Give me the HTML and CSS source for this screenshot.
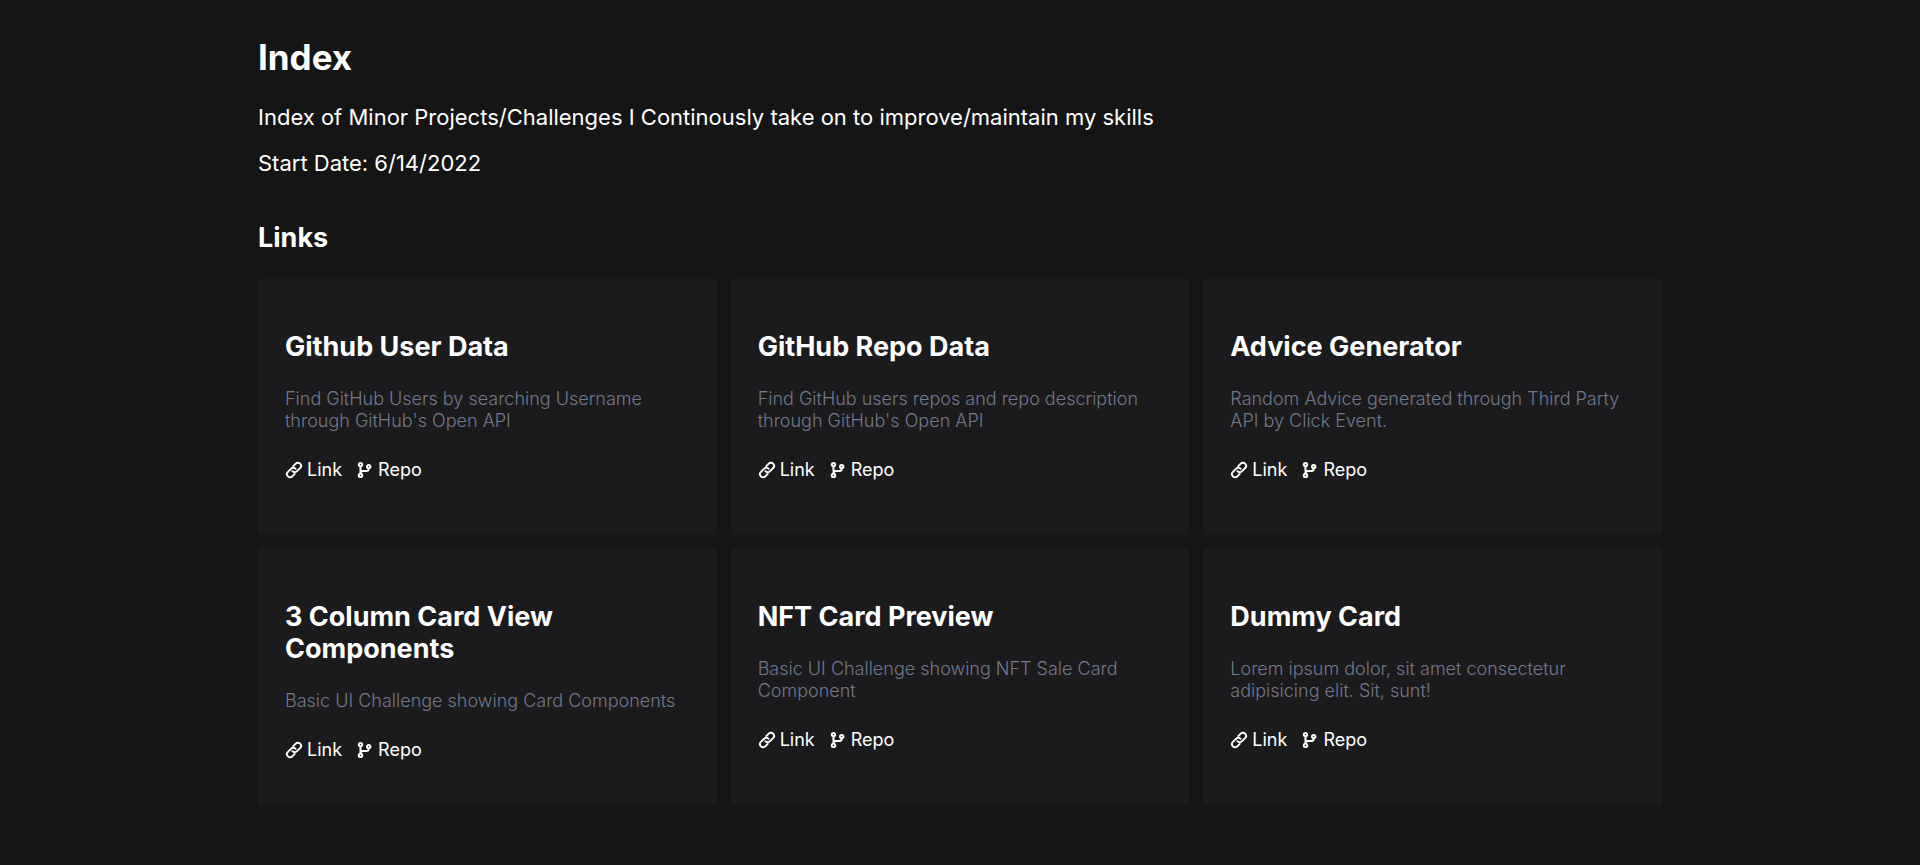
FILE: index.html
```
<!DOCTYPE html>
<html lang="en">
<head>
<meta charset="utf-8">
<meta name="viewport" content="width=device-width, initial-scale=1">
<title>Index</title>
<link rel="stylesheet" href="styles.css">
</head>
<body>
<svg class="sprite" aria-hidden="true">
  <symbol id="icon-link" viewBox="0 0 18 18"><g fill="none" stroke="currentColor" stroke-width="1.9" stroke-linecap="round" stroke-linejoin="round"><path d="M7.4 10.2a3 3 0 0 0 4.4.2l3.3-3.3a3.1 3.1 0 0 0-4.4-4.4L8.3 5.1"/><path d="M10.6 7.8a3 3 0 0 0-4.4-.2l-3.3 3.3a3.1 3.1 0 0 0 4.4 4.4l2.4-2.4"/></g></symbol>
  <symbol id="icon-branch" viewBox="0 0 18 18"><g fill="none" stroke="currentColor" stroke-width="2"><circle cx="4.5" cy="3.6" r="1.7"/><circle cx="4.5" cy="14.4" r="1.7"/><circle cx="12.7" cy="5.6" r="1.7"/><path d="M4.5 5.3v7.4M12.7 7.3v.4c0 1.4-.8 2.2-2.2 2.2H7.2c-1.6 0-2.7.8-2.7 2.4"/></g></symbol>
</svg>
<main class="page">
  <header class="intro">
    <h1 class="title">Index</h1>
    <p class="lead">Index of Minor Projects/Challenges I Continously take on to improve/maintain my skills</p>
    <p class="lead">Start Date: 6/14/2022</p>
  </header>
  <section>
    <h2 class="heading">Links</h2>
    <div class="grid">
      <article class="card">
        <h2 class="heading">Github User Data</h2>
        <p class="text">Find GitHub Users by searching Username through GitHub's Open API</p>
        <nav class="links"><a class="link" href="#"><svg class="icon"><use href="#icon-link"/></svg>Link</a><a class="link" href="#"><svg class="icon"><use href="#icon-branch"/></svg>Repo</a></nav>
      </article>
      <article class="card">
        <h2 class="heading">GitHub Repo Data</h2>
        <p class="text">Find GitHub users repos and repo description through GitHub's Open API</p>
        <nav class="links"><a class="link" href="#"><svg class="icon"><use href="#icon-link"/></svg>Link</a><a class="link" href="#"><svg class="icon"><use href="#icon-branch"/></svg>Repo</a></nav>
      </article>
      <article class="card">
        <h2 class="heading">Advice Generator</h2>
        <p class="text">Random Advice generated through Third Party API by Click Event.</p>
        <nav class="links"><a class="link" href="#"><svg class="icon"><use href="#icon-link"/></svg>Link</a><a class="link" href="#"><svg class="icon"><use href="#icon-branch"/></svg>Repo</a></nav>
      </article>
      <article class="card">
        <h2 class="heading">3 Column Card View Components</h2>
        <p class="text">Basic UI Challenge showing Card Components</p>
        <nav class="links"><a class="link" href="#"><svg class="icon"><use href="#icon-link"/></svg>Link</a><a class="link" href="#"><svg class="icon"><use href="#icon-branch"/></svg>Repo</a></nav>
      </article>
      <article class="card">
        <h2 class="heading">NFT Card Preview</h2>
        <p class="text">Basic UI Challenge showing NFT Sale Card Component</p>
        <nav class="links"><a class="link" href="#"><svg class="icon"><use href="#icon-link"/></svg>Link</a><a class="link" href="#"><svg class="icon"><use href="#icon-branch"/></svg>Repo</a></nav>
      </article>
      <article class="card">
        <h2 class="heading">Dummy Card</h2>
        <p class="text">Lorem ipsum dolor, sit amet consectetur adipisicing elit. Sit, sunt!</p>
        <nav class="links"><a class="link" href="#"><svg class="icon"><use href="#icon-link"/></svg>Link</a><a class="link" href="#"><svg class="icon"><use href="#icon-branch"/></svg>Repo</a></nav>
      </article>
    </div>
  </section>
</main>
</body>
</html>
```
FILE: styles.css
```
* {
  box-sizing: border-box;
  margin: 0;
}

body {
  background: #151515;
  color: #fff;
  font-family: Inter, "Open Sans", sans-serif;
}

.sprite {
  display: none;
}

.page {
  max-width: 1436px;
  margin: 0 auto;
  padding: 37px 16px;
}

.intro {
  display: flex;
  flex-direction: column;
  gap: 20px;
  margin-bottom: 46px;
}

.title {
  margin-bottom: 7px;
  font-size: 35px;
  line-height: 40px;
  font-weight: 700;
}

.lead {
  font-size: 22px;
  line-height: 26px;
}

.heading {
  margin-bottom: 25px;
  font-size: 27px;
  line-height: 32px;
  font-weight: 700;
}

.grid {
  display: grid;
  grid-template-columns: repeat(auto-fit, minmax(min(100%, 400px), 1fr));
  grid-auto-rows: 1fr;
  gap: 14px;
}

.card {
  padding: 52px 27px 44px;
  background: #1b1b1d;
  border-radius: 2px;
}

.text {
  margin-bottom: 27px;
  color: #74788d;
  font-size: 18px;
  line-height: 22px;
  font-weight: 300;
}

.links {
  display: flex;
  gap: 14px;
}

.link {
  display: inline-flex;
  align-items: center;
  gap: 4px;
  color: #fff;
  font-size: 18px;
  line-height: 22px;
  text-decoration: none;
}

.icon {
  width: 18px;
  height: 18px;
}
```
